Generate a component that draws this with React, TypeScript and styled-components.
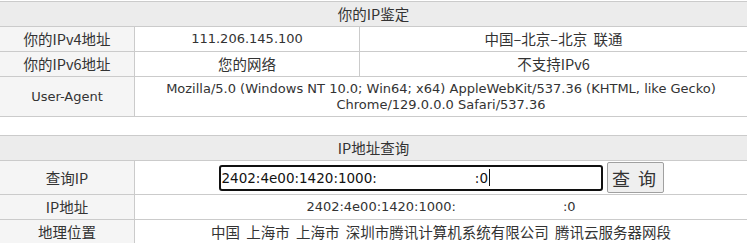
import React from "react";
import styled, { createGlobalStyle } from "styled-components";

const GlobalStyle = createGlobalStyle`
  html, body { margin: 0; padding: 0; background: #fff; }
  body {
    font-family: "DejaVu Sans", "Noto Sans CJK SC", sans-serif;
    font-size: 13px;
    color: #333;
  }
`;

const Page = styled.div`
  width: 747px;
  padding-top: 1px;
  display: flex;
  flex-direction: column;
  gap: 18px;
`;

const Table = styled.div`
  border-top: 1px solid #cbcbcb;
  display: flex;
  flex-direction: column;
`;

const Header = styled.div`
  height: 24px;
  background: #ececec;
  border-bottom: 1px solid #cbcbcb;
  display: flex;
  align-items: center;
  justify-content: center;
  font-family: "Noto Sans CJK SC", sans-serif;
  font-size: 14.5px;
  line-height: 16px;
`;

const Row = styled.div<{ $h: number; $cols: string }>`
  display: grid;
  grid-template-columns: ${(p) => p.$cols};
  height: ${(p) => p.$h}px;
  border-bottom: 1px solid #cbcbcb;
`;

const Cell = styled.div<{ $label?: boolean; $zh?: boolean }>`
  box-sizing: border-box;
  display: flex;
  align-items: center;
  justify-content: center;
  text-align: center;
  line-height: 16px;
  white-space: pre;
  background: ${(p) => (p.$label ? "#f5f5f5" : "#fff")};
  ${(p) =>
    p.$zh
      ? `font-family: "Noto Sans CJK SC", sans-serif; font-size: 14.5px; word-spacing: 3px;`
      : ""}
  & + & {
    border-left: 1px solid #cbcbcb;
  }
`;

const Gap = styled.span<{ $w: number }>`
  display: inline-block;
  width: ${(p) => p.$w}px;
`;

const QueryBox = styled.div`
  display: flex;
  align-items: center;
  gap: 4px;
`;

const Input = styled.div`
  box-sizing: border-box;
  width: 384px;
  height: 26px;
  border: 2px solid #101010;
  border-radius: 3px;
  display: flex;
  align-items: center;
  padding-left: 1px;
  font-size: 13.5px;
  color: #111;
  white-space: pre;
`;

const Caret = styled.span`
  display: inline-block;
  width: 1px;
  height: 17px;
  background: #111;
  margin-left: 1px;
`;

const Button = styled.button`
  box-sizing: border-box;
  width: 57px;
  height: 31px;
  border: 1px solid #a0a0a0;
  border-radius: 2px;
  background: #efefef;
  font-family: "Noto Sans CJK SC", sans-serif;
  font-size: 18px;
  color: #333;
  letter-spacing: 2px;
  padding: 0;
`;

const COLS3 = "134px 225px 1fr";
const COLS2 = "134px 1fr";

export default function App() {
  return (
    <>
      <GlobalStyle />
      <Page>
        <Table>
          <Header>你的IP鉴定</Header>
          <Row $h={24} $cols={COLS3}>
            <Cell $label $zh>你的IPv4地址</Cell>
            <Cell>111.206.145.100</Cell>
            <Cell $zh>中国–北京–北京 联通</Cell>
          </Row>
          <Row $h={24} $cols={COLS3}>
            <Cell $label $zh>你的IPv6地址</Cell>
            <Cell $zh>您的网络</Cell>
            <Cell $zh>不支持IPv6</Cell>
          </Row>
          <Row $h={39} $cols={COLS2}>
            <Cell $label>User-Agent</Cell>
            <Cell>
              {"Mozilla/5.0 (Windows NT 10.0; Win64; x64) AppleWebKit/537.36 (KHTML, like Gecko)\nChrome/129.0.0.0 Safari/537.36"}
            </Cell>
          </Row>
        </Table>
        <Table>
          <Header>IP地址查询</Header>
          <Row $h={33} $cols={COLS2}>
            <Cell $label $zh>查询IP</Cell>
            <Cell>
              <QueryBox>
                <Input>
                  2402:4e00:1420:1000:
                  <Gap $w={98} />
                  :0
                  <Caret />
                </Input>
                <Button>查 询</Button>
              </QueryBox>
            </Cell>
          </Row>
          <Row $h={24} $cols={COLS2}>
            <Cell $label $zh>IP地址</Cell>
            <Cell>
              2402:4e00:1420:1000:
              <Gap $w={107} />
              :0
            </Cell>
          </Row>
          <Row $h={24} $cols={COLS2}>
            <Cell $label $zh>地理位置</Cell>
            <Cell $zh>中国 上海市 上海市 深圳市腾讯计算机系统有限公司 腾讯云服务器网段</Cell>
          </Row>
        </Table>
      </Page>
    </>
  );
}
